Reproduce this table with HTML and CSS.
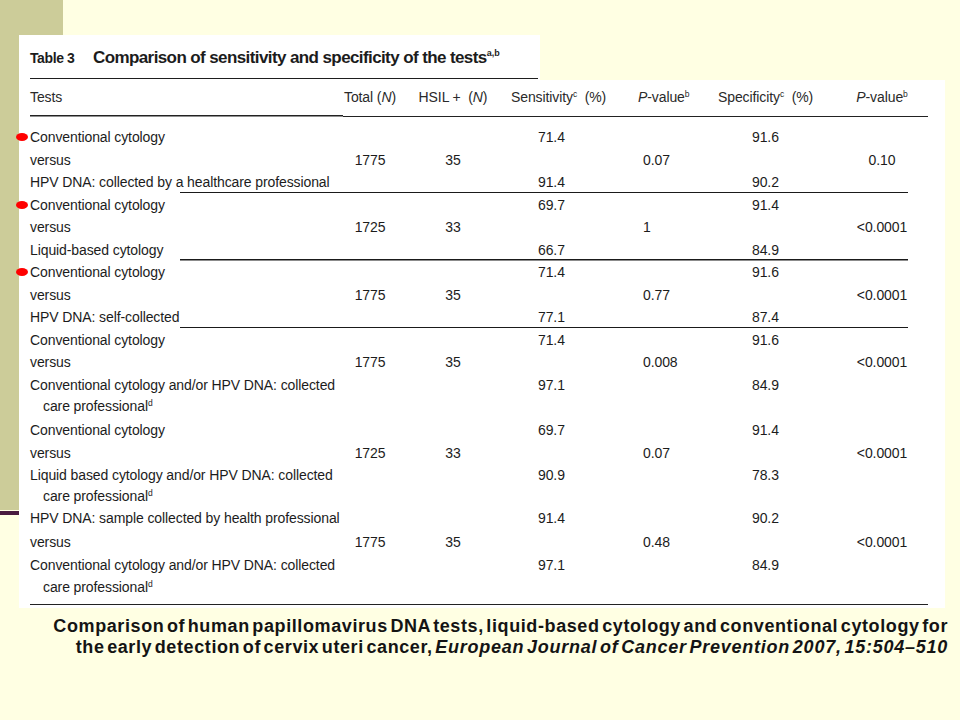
FILE: index.html
```html
<!DOCTYPE html>
<html>
<head>
<meta charset="utf-8">
<title>Table 3</title>
<link rel="stylesheet" href="styles.css">
</head>
<body>
<div class="slide">
  <div class="title-box">
    <div class="title-row"><span class="tno">Table 3</span><span class="ttl">Comparison of sensitivity and specificity of the tests<sup>a,b</sup></span></div>
  </div>
  <div class="table-box">
    <div class="head">
      <span class="t">Tests</span>
      <span class="tot">Total (<i>N</i>)</span>
      <span class="hsil">HSIL + &nbsp;(<i>N</i>)</span>
      <span class="sens">Sensitivity<sup>c</sup> &nbsp;(%)</span>
      <span class="p1"><i>P</i>-value<sup>b</sup></span>
      <span class="spec">Specificity<sup>c</sup> &nbsp;(%)</span>
      <span class="p2"><i>P</i>-value<sup>b</sup></span>
    </div>
    <div class="body">
      <div class="grp sep">
        <span class="t r1 bul">Conventional cytology</span>
        <span class="t r2">versus</span>
        <span class="t r3">HPV DNA: collected by a healthcare professional</span>
        <span class="sens r1">71.4</span>
        <span class="tot r2">1775</span>
        <span class="hsil r2">35</span>
        <span class="p1 r2">0.07</span>
        <span class="spec r1">91.6</span>
        <span class="p2 r2">0.10</span>
        <span class="sens r3">91.4</span>
        <span class="spec r3">90.2</span>
      </div>
      <div class="grp sep">
        <span class="t r1 bul">Conventional cytology</span>
        <span class="t r2">versus</span>
        <span class="t r3">Liquid-based cytology</span>
        <span class="sens r1">69.7</span>
        <span class="tot r2">1725</span>
        <span class="hsil r2">33</span>
        <span class="p1 r2">1</span>
        <span class="spec r1">91.4</span>
        <span class="p2 r2">&lt;0.0001</span>
        <span class="sens r3">66.7</span>
        <span class="spec r3">84.9</span>
      </div>
      <div class="grp sep">
        <span class="t r1 bul">Conventional cytology</span>
        <span class="t r2">versus</span>
        <span class="t r3">HPV DNA: self-collected</span>
        <span class="sens r1">71.4</span>
        <span class="tot r2">1775</span>
        <span class="hsil r2">35</span>
        <span class="p1 r2">0.77</span>
        <span class="spec r1">91.6</span>
        <span class="p2 r2">&lt;0.0001</span>
        <span class="sens r3">77.1</span>
        <span class="spec r3">87.4</span>
      </div>
      <div class="grp g4">
        <span class="t r1">Conventional cytology</span>
        <span class="t r2">versus</span>
        <span class="t r3">Conventional cytology and/or HPV DNA: collected</span>
        <span class="t r4 wrap">care professional<sup>d</sup></span>
        <span class="sens r1">71.4</span>
        <span class="tot r2">1775</span>
        <span class="hsil r2">35</span>
        <span class="p1 r2">0.008</span>
        <span class="spec r1">91.6</span>
        <span class="p2 r2">&lt;0.0001</span>
        <span class="sens r3">97.1</span>
        <span class="spec r3">84.9</span>
      </div>
      <div class="grp g4 g5">
        <span class="t r1">Conventional cytology</span>
        <span class="t r2">versus</span>
        <span class="t r3">Liquid based cytology and/or HPV DNA: collected</span>
        <span class="t r4 wrap">care professional<sup>d</sup></span>
        <span class="sens r1">69.7</span>
        <span class="tot r2">1725</span>
        <span class="hsil r2">33</span>
        <span class="p1 r2">0.07</span>
        <span class="spec r1">91.4</span>
        <span class="p2 r2">&lt;0.0001</span>
        <span class="sens r3">90.9</span>
        <span class="spec r3">78.3</span>
      </div>
      <div class="grp g6">
        <span class="t r1">HPV DNA: sample collected by health professional</span>
        <span class="t r2">versus</span>
        <span class="t r3">Conventional cytology and/or HPV DNA: collected</span>
        <span class="t r4 wrap">care professional<sup>d</sup></span>
        <span class="sens r1">91.4</span>
        <span class="tot r2">1775</span>
        <span class="hsil r2">35</span>
        <span class="p1 r2">0.48</span>
        <span class="spec r1">90.2</span>
        <span class="p2 r2">&lt;0.0001</span>
        <span class="sens r3">97.1</span>
        <span class="spec r3">84.9</span>
      </div>
    </div>
  </div>
  <p class="caption">Comparison of human papillomavirus DNA tests, liquid-based cytology and conventional cytology for<br>the early detection of cervix uteri cancer, <i>European Journal of Cancer Prevention 2007, 15:504–510</i></p>
</div>
</body>
</html>
```

FILE: styles.css
```css
html, body {
  margin: 0;
  padding: 0;
}

.slide {
  width: 960px;
  height: 720px;
  box-sizing: border-box;
  padding: 35px 0 0 19px;
  overflow: hidden;
  background-color: #ffffe3;
  background-image:
    linear-gradient(#cccc99, #cccc99),
    linear-gradient(#4a1c3f, #4a1c3f);
  background-repeat: no-repeat;
  background-size: 63px 510px, 63px 4px;
  background-position: 0 0, 0 511px;
  font-family: "Liberation Sans", Arial, sans-serif;
  color: #1c1c1c;
}

sup {
  font-size: 8.5px;
  line-height: 0;
  vertical-align: 5px;
}

/* ---- title strip ---- */
.title-box {
  width: 521px;
  height: 45px;
  background: #ffffff;
  box-sizing: border-box;
  padding: 2px 0 0 11px;
}

.title-row {
  width: 508px;
  height: 41px;
  display: flex;
  align-items: center;
  border-bottom: 1.5px solid #1e1e1e;
  white-space: nowrap;
}

.tno {
  width: 63px;
  flex: none;
  font-weight: bold;
  font-size: 14px;
  letter-spacing: -0.4px;
}

.ttl {
  font-weight: bold;
  font-size: 17px;
  letter-spacing: -0.6px;
}

.ttl sup {
  font-size: 9px;
  letter-spacing: 0;
  vertical-align: 7px;
}

/* ---- table ---- */
.table-box {
  width: 926px;
  background: #ffffff;
  box-sizing: border-box;
  padding: 0 0 3px 11px;
  font-size: 14px;
  letter-spacing: -0.1px;
}

.head,
.grp {
  display: grid;
  grid-template-columns: 310px 60px 106px 114px 80px 130px 104px;
  align-items: center;
  white-space: nowrap;
}

.head {
  height: 37px;
  box-sizing: border-box;
  padding-bottom: 3px;
  color: #2a2a2a;
  background-image:
    linear-gradient(#222, #222),
    linear-gradient(#222, #222);
  background-repeat: no-repeat;
  background-size: 313px 1.5px, 585px 1.5px;
  background-position: 0 34.5px, 313px 36px;
}

.body {
  padding: 8.75px 0 7.5px;
  background-image:
    linear-gradient(#222, #222),
    linear-gradient(#222, #222);
  background-repeat: no-repeat;
  background-size: 313px 1.5px, 585px 1.5px;
  background-position: 0 100%, 313px 100%;
}

.grp {
  grid-template-rows: repeat(3, 22.5px);
}

.g4 {
  grid-template-rows: 22.5px 22.5px 22.5px 20px;
}

.g5 {
  margin-top: 3px;
}

.g6 {
  grid-template-rows: 23.5px 23.5px 23.5px 21px;
}

.sep {
  background-image: linear-gradient(#1a1a1a, #1a1a1a);
  background-repeat: no-repeat;
  background-size: 728px 1.5px;
  background-position: 150px 100%;
}

.t { grid-column: 1; }
.tot { grid-column: 2; text-align: center; }
.hsil { grid-column: 3; text-align: center; }
.sens { grid-column: 4; padding-left: 32px; }
.p1 { grid-column: 5; padding-left: 23px; }
.spec { grid-column: 6; padding-left: 52px; }
.p2 { grid-column: 7; text-align: center; }

.head .sens { padding-left: 5px; }
.head .p1 { padding-left: 18px; }
.head .spec { padding-left: 18px; }

.r1 { grid-row: 1; }
.r2 { grid-row: 2; }
.r3 { grid-row: 3; }
.r4 { grid-row: 4; }

.wrap {
  padding-left: 13px;
}

.bul {
  position: relative;
}

.bul::before {
  content: "";
  position: absolute;
  left: -14px;
  top: 50%;
  width: 12px;
  height: 8px;
  margin-top: -4px;
  border-radius: 50%;
  background: #ff0000;
}

/* ---- caption ---- */
.caption {
  margin: 8px 12px 0 0;
  text-align: right;
  font-weight: bold;
  font-size: 18px;
  line-height: 21px;
  letter-spacing: 0.6px;
  word-spacing: -3px;
  color: #141414;
  white-space: nowrap;
}

.caption i {
  letter-spacing: 0.75px;
}
```
